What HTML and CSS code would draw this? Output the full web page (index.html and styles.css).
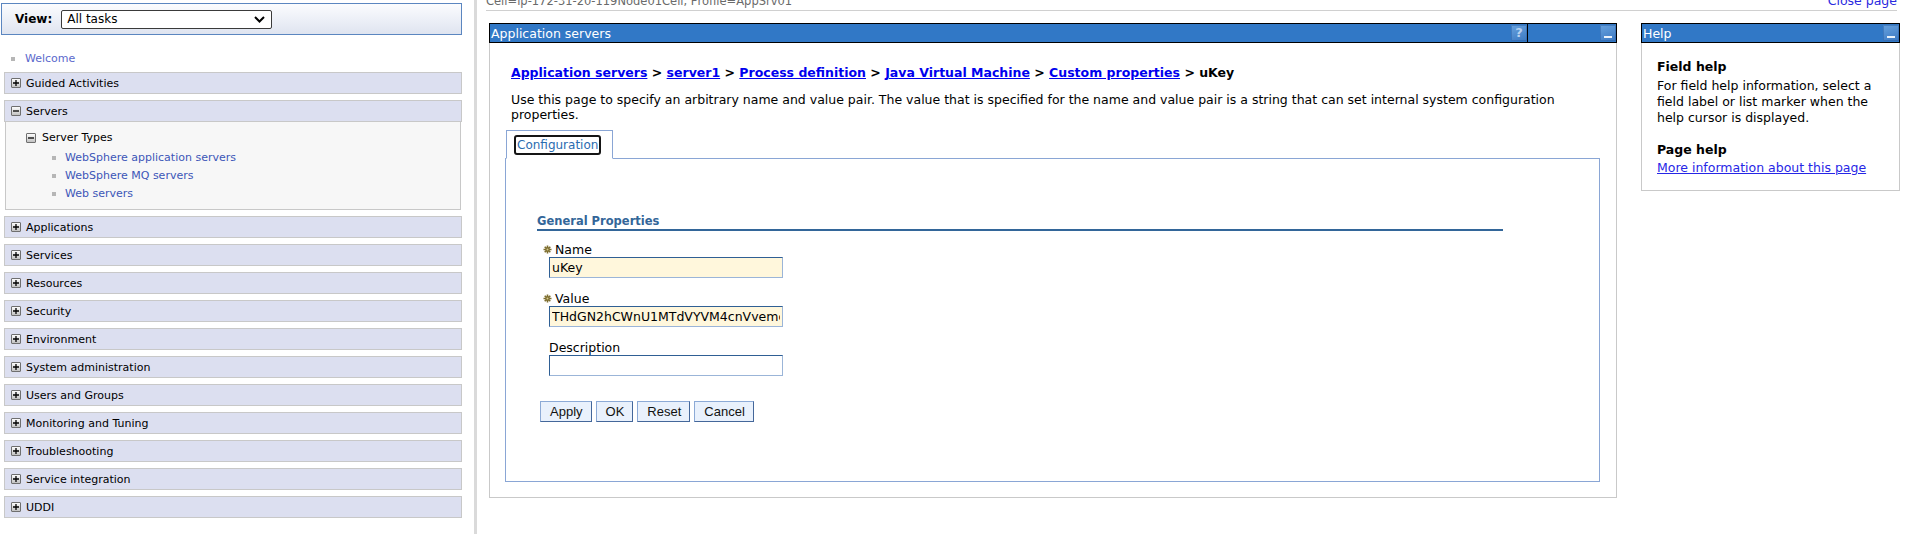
FILE: index.html
```html
<!DOCTYPE html>
<html lang="en">
<head>
<meta charset="utf-8">
<title>Application servers - uKey</title>
<link rel="stylesheet" href="styles.css">
</head>
<body>
<div class="frames">
  <nav class="nav">
    <div class="viewbar">
      <span class="viewlabel">View:</span>
      <div class="select"><span>All tasks</span><svg class="chev" width="11" height="7" viewBox="0 0 11 7"><path d="M1 1l4.5 4.5L10 1" fill="none" stroke="#000" stroke-width="2"/></svg></div>
    </div>
    <ul class="welcome"><li><span class="sq"></span><a href="#">Welcome</a></li></ul>

    <div class="group"><div class="ghead"><span class="tog"><svg width="8" height="8" viewBox="0 0 8 8"><path d="M1 4h6M4 1v6" stroke="#000" stroke-width="1.3"/></svg></span>Guided Activities</div></div>

    <div class="group">
      <div class="ghead"><span class="tog"><svg width="8" height="8" viewBox="0 0 8 8"><path d="M1 4h6" stroke="#000" stroke-width="1.3"/></svg></span>Servers</div>
      <div class="gbody">
        <div class="sub"><span class="tog"><svg width="8" height="8" viewBox="0 0 8 8"><path d="M1 4h6" stroke="#000" stroke-width="1.3"/></svg></span>Server Types</div>
        <ul class="items">
          <li><span class="sq"></span><a href="#">WebSphere application servers</a></li>
          <li><span class="sq"></span><a href="#">WebSphere MQ servers</a></li>
          <li><span class="sq"></span><a href="#">Web servers</a></li>
        </ul>
      </div>
    </div>

    <div class="group"><div class="ghead"><span class="tog"><svg width="8" height="8" viewBox="0 0 8 8"><path d="M1 4h6M4 1v6" stroke="#000" stroke-width="1.3"/></svg></span>Applications</div></div>
    <div class="group"><div class="ghead"><span class="tog"><svg width="8" height="8" viewBox="0 0 8 8"><path d="M1 4h6M4 1v6" stroke="#000" stroke-width="1.3"/></svg></span>Services</div></div>
    <div class="group"><div class="ghead"><span class="tog"><svg width="8" height="8" viewBox="0 0 8 8"><path d="M1 4h6M4 1v6" stroke="#000" stroke-width="1.3"/></svg></span>Resources</div></div>
    <div class="group"><div class="ghead"><span class="tog"><svg width="8" height="8" viewBox="0 0 8 8"><path d="M1 4h6M4 1v6" stroke="#000" stroke-width="1.3"/></svg></span>Security</div></div>
    <div class="group"><div class="ghead"><span class="tog"><svg width="8" height="8" viewBox="0 0 8 8"><path d="M1 4h6M4 1v6" stroke="#000" stroke-width="1.3"/></svg></span>Environment</div></div>
    <div class="group"><div class="ghead"><span class="tog"><svg width="8" height="8" viewBox="0 0 8 8"><path d="M1 4h6M4 1v6" stroke="#000" stroke-width="1.3"/></svg></span>System administration</div></div>
    <div class="group"><div class="ghead"><span class="tog"><svg width="8" height="8" viewBox="0 0 8 8"><path d="M1 4h6M4 1v6" stroke="#000" stroke-width="1.3"/></svg></span>Users and Groups</div></div>
    <div class="group"><div class="ghead"><span class="tog"><svg width="8" height="8" viewBox="0 0 8 8"><path d="M1 4h6M4 1v6" stroke="#000" stroke-width="1.3"/></svg></span>Monitoring and Tuning</div></div>
    <div class="group"><div class="ghead"><span class="tog"><svg width="8" height="8" viewBox="0 0 8 8"><path d="M1 4h6M4 1v6" stroke="#000" stroke-width="1.3"/></svg></span>Troubleshooting</div></div>
    <div class="group"><div class="ghead"><span class="tog"><svg width="8" height="8" viewBox="0 0 8 8"><path d="M1 4h6M4 1v6" stroke="#000" stroke-width="1.3"/></svg></span>Service integration</div></div>
    <div class="group"><div class="ghead"><span class="tog"><svg width="8" height="8" viewBox="0 0 8 8"><path d="M1 4h6M4 1v6" stroke="#000" stroke-width="1.3"/></svg></span>UDDI</div></div>
  </nav>

  <div class="divider"></div>

  <div class="content">
    <div class="topbar">
      <span class="cell">Cell=ip-172-31-20-119Node01Cell, Profile=AppSrv01</span>
      <a class="close" href="#">Close page</a>
    </div>

    <div class="panels">
      <section class="panel main">
        <div class="phead">
          <span class="ptitle">Application servers</span>
          <span class="help-cell"><span class="ico q">?</span></span>
          <span class="min-cell"><span class="ico min"><span class="bar"></span></span></span>
        </div>
        <div class="pbody">
          <div class="crumbs"><a href="#">Application servers</a> &gt; <a href="#">server1</a> &gt; <a href="#">Process definition</a> &gt; <a href="#">Java Virtual Machine</a> &gt; <a href="#">Custom properties</a> &gt; uKey</div>
          <p class="desc">Use this page to specify an arbitrary name and value pair. The value that is specified for the name and value pair is a string that can set internal system configuration properties.</p>
          <div class="tabs"><div class="tab"><a class="tablink" href="#">Configuration</a></div></div>
          <div class="tabbox">
            <div class="props">
              <h3>General Properties</h3>
              <div class="field first">
                <label class="req-label"><svg width="9" height="9" viewBox="0 0 9 9"><path d="M4.5 .5v8M.5 4.5h8M1.7 1.7l5.6 5.6M7.3 1.7l-5.6 5.6" stroke="#7d6d2e" stroke-width="1.6"/><circle cx="4.5" cy="4.5" r="1" fill="#d8cc8e"/></svg>Name</label>
                <input class="req" type="text" value="uKey">
              </div>
              <div class="field">
                <label class="req-label"><svg width="9" height="9" viewBox="0 0 9 9"><path d="M4.5 .5v8M.5 4.5h8M1.7 1.7l5.6 5.6M7.3 1.7l-5.6 5.6" stroke="#7d6d2e" stroke-width="1.6"/><circle cx="4.5" cy="4.5" r="1" fill="#d8cc8e"/></svg>Value</label>
                <input class="req" type="text" value="THdGN2hCWnU1MTdVYVM4cnVvemc2Tk9RZz09">
              </div>
              <div class="field">
                <label class="plain-label">Description</label>
                <input type="text" value="">
              </div>
              <div class="buttons">
                <button type="button">Apply</button>
                <button type="button">OK</button>
                <button type="button">Reset</button>
                <button type="button">Cancel</button>
              </div>
            </div>
          </div>
        </div>
      </section>

      <section class="panel helpp">
        <div class="phead">
          <span class="ptitle">Help</span>
          <span class="min-cell short"><span class="ico min"><span class="bar"></span></span></span>
        </div>
        <div class="hbody">
          <h4>Field help</h4>
          <p>For field help information, select a<br>field label or list marker when the<br>help cursor is displayed.</p>
          <h4>Page help</h4>
          <a class="morelink" href="#">More information about this page</a>
        </div>
      </section>
    </div>
  </div>
</div>
</body>
</html>
```

FILE: styles.css
```css
html, body {
  margin: 0;
  padding: 0;
  background: #fff;
  overflow: hidden;
}
body {
  font-family: "DejaVu Sans", Verdana, sans-serif;
  color: #000;
}
.frames {
  display: flex;
  height: 534px;
}

/* ---------- left navigation ---------- */
.nav {
  width: 474px;
  flex: none;
  font-size: 11px;
}
.viewbar {
  margin: 3px 0 0 1px;
  width: 461px;
  height: 32px;
  box-sizing: border-box;
  border: 1px solid #5b86c0;
  background: linear-gradient(#fbfcfe, #dfe4f0);
  display: flex;
  align-items: center;
  padding-left: 13px;
  gap: 9px;
}
.viewlabel {
  font-weight: bold;
  font-size: 12px;
}
.select {
  width: 211px;
  height: 19px;
  box-sizing: border-box;
  border: 1px solid #3a3a3a;
  border-radius: 2px;
  background: #fff;
  display: flex;
  align-items: center;
  justify-content: space-between;
  padding: 0 6px 0 5px;
  font-size: 12px;
}
.chev { display: block; }
.welcome {
  list-style: none;
  margin: 0;
  padding: 17px 0 6px 11px;
  line-height: 14px;
}
.welcome li, .items li {
  display: flex;
  align-items: center;
}
.sq {
  width: 4px;
  height: 4px;
  background: #b6b6b6;
  margin-right: 10px;
  flex: none;
}
.welcome a {
  color: #5a68cc;
  text-decoration: none;
}
.group {
  margin: 0 0 6px 4px;
  width: 458px;
}
.ghead {
  height: 22px;
  box-sizing: border-box;
  border: 1px solid #c8c8c8;
  background: #dcdff0;
  display: flex;
  align-items: center;
  padding-left: 6px;
  gap: 5px;
}
.tog {
  width: 10px;
  height: 10px;
  box-sizing: border-box;
  border: 1px solid #6f6f6f;
  border-radius: 1px;
  background: linear-gradient(#fcfcfc, #c2c2c2);
  display: flex;
  align-items: center;
  justify-content: center;
  flex: none;
}
.tog svg { display: block; }
.gbody {
  margin-left: 1px;
  width: 456px;
  box-sizing: border-box;
  border: 1px solid #c8c8c8;
  border-top: 0;
  background: #f7f7f7;
  padding: 7px 0 6px 0;
}
.sub {
  display: flex;
  align-items: center;
  gap: 6px;
  padding-left: 20px;
  line-height: 18px;
}
.items {
  list-style: none;
  margin: 2px 0 0;
  padding: 0 0 0 46px;
  line-height: 18px;
}
.items .sq { margin-right: 9px; }
.items a {
  color: #3c56b8;
  text-decoration: none;
}

.divider {
  width: 3px;
  flex: none;
  background: #dadada;
}

/* ---------- right content ---------- */
.content {
  flex: 1;
  min-width: 0;
  padding: 0 16px 0 9px;
}
.topbar {
  margin-top: -6px;
  height: 16px;
  border-bottom: 1px solid #d0d0d0;
  display: flex;
  justify-content: space-between;
  line-height: 14px;
}
.cell {
  font-size: 11.5px;
  color: #6a6a6a;
}
.close {
  font-size: 12.5px;
  color: #2a2ae0;
  text-decoration: none;
}
.panels {
  display: flex;
  align-items: flex-start;
  gap: 24px;
  margin: 12px 0 0 3px;
}
.panel { flex: none; }
.main { width: 1128px; }
.helpp { width: 259px; }

.phead {
  height: 20px;
  box-sizing: border-box;
  border: 1px solid #000;
  background: #3178c6;
  color: #fff;
  display: flex;
  align-items: center;
  font-size: 12.5px;
}
.ptitle {
  flex: 1;
  padding-left: 1px;
  white-space: nowrap;
}
.help-cell {
  align-self: stretch;
  display: flex;
  align-items: center;
  border-right: 1px solid #000;
}
.min-cell {
  width: 88px;
  align-self: stretch;
  display: flex;
  align-items: center;
  justify-content: flex-end;
}
.min-cell.short { width: auto; }
.ico {
  width: 16px;
  height: 16px;
  box-sizing: border-box;
  background: linear-gradient(160deg, #68a2de, #3b78c2);
  box-shadow: inset 0 0 0 1px rgba(40, 90, 160, .45);
}
.ico.q {
  color: #b9d2ef;
  font-weight: bold;
  font-size: 13px;
  line-height: 16px;
  text-align: center;
}
.ico.min {
  display: flex;
  align-items: flex-end;
  justify-content: center;
  padding-bottom: 3px;
}
.ico.min .bar {
  width: 8px;
  height: 2px;
  background: #eaf2fb;
}

.pbody {
  border: 1px solid #c9c9c9;
  border-top: 0;
  padding: 22px 16px 15px 15px;
  font-size: 12.5px;
  line-height: 15px;
}
.crumbs {
  margin-left: 6px;
  font-weight: bold;
}
.crumbs a {
  color: #0000ee;
  text-decoration: underline;
}
.desc {
  margin: 12px 0 0 6px;
}
.tabs {
  margin-top: 8px;
  display: flex;
  padding-left: 1px;
}
.tab {
  width: 107px;
  height: 29px;
  box-sizing: border-box;
  border: 1px solid #8aa6d5;
  border-bottom: 1px solid #fff;
  margin-bottom: -1px;
  position: relative;
  background: #fff;
  padding: 4px 0 0 7px;
}
.tablink {
  display: inline-block;
  border: 2px solid #151515;
  border-radius: 3px;
  padding: 0 1px;
  line-height: 16px;
  font-size: 12px;
  color: #2b6cb0;
  text-decoration: none;
}
.tabbox {
  border: 1px solid #8aa6d5;
  padding: 55px 0 59px 31px;
}
.props { width: 966px; }
.props h3 {
  margin: 0;
  font-size: 11.5px;
  line-height: 15px;
  color: #336699;
  border-bottom: 2px solid #336699;
}
.field { margin-top: 13px; }
.field.first { margin-top: 11px; }
.field label {
  display: flex;
  align-items: center;
  line-height: 15px;
}
.req-label {
  margin-left: 6px;
  gap: 3px;
}
.req-label svg { display: block; }
.plain-label { margin-left: 12px; }
.field input {
  display: block;
  margin: 0 0 0 12px;
  width: 234px;
  height: 21px;
  box-sizing: border-box;
  border: 1px solid;
  border-color: #2f5f94 #9bb5d8 #9bb5d8 #2f5f94;
  padding: 0 2px;
  font-family: "DejaVu Sans", Verdana, sans-serif;
  font-size: 12.5px;
  color: #000;
  background: #fff;
  outline: none;
}
.field input.req { background: #fff7dc; }
.buttons {
  margin: 25px 0 0 3px;
  display: flex;
  gap: 4px;
}
.buttons button {
  height: 21px;
  padding: 0 8px 0 9px;
  font-family: "Liberation Sans", Arial, sans-serif;
  font-size: 13px;
  color: #111;
  background: #e9f1fc;
  border: 1px solid;
  border-color: #8caad6 #44679a #44679a #8caad6;
  border-radius: 0;
}

.hbody {
  border: 1px solid #c9c9c9;
  border-top: 0;
  padding: 16px 4px 14px 15px;
  font-size: 12.5px;
  line-height: 16px;
}
.hbody h4 {
  margin: 0;
  font-size: 12.5px;
}
.hbody p {
  margin: 3px 0 16px;
}
.morelink {
  display: block;
  margin-top: 2px;
  color: #2626e6;
  text-decoration: underline;
}
```
